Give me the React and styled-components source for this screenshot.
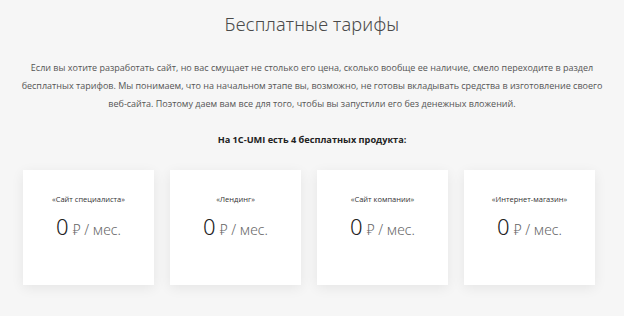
import styled, { createGlobalStyle } from 'styled-components';

const GlobalStyle = createGlobalStyle`
  html, body {
    margin: 0;
    padding: 0;
    background: #f6f6f6;
  }
`;

const Page = styled.div`
  width: 624px;
  height: 316px;
  box-sizing: border-box;
  padding-top: 10px;
  display: flex;
  flex-direction: column;
  align-items: center;
  background: #f6f6f6;
  font-family: 'Open Sans', 'Liberation Sans', sans-serif;
`;

const Title = styled.h1`
  margin: 0;
  font-family: 'Noto Sans', 'Open Sans', sans-serif;
  font-weight: 300;
  font-size: 18.2px;
  line-height: 28px;
  letter-spacing: 0.2px;
  color: #4a4a4a;
`;

const Lead = styled.p`
  margin: 21px 0 0;
  font-size: 9px;
  line-height: 18px;
  text-align: center;
  white-space: nowrap;
  color: #555555;
`;

const Subtitle = styled.p`
  margin: 19px 0 0;
  font-size: 9.2px;
  font-weight: 700;
  line-height: 16px;
  color: #222222;
`;

const Cards = styled.div`
  margin-top: 22px;
  display: flex;
  gap: 16px;
  padding-right: 6px;
`;

const Card = styled.div`
  width: 131px;
  height: 115px;
  box-sizing: border-box;
  padding-top: 23px;
  display: flex;
  flex-direction: column;
  align-items: center;
  background: #ffffff;
  box-shadow: 0 3px 12px rgba(0, 0, 0, 0.07);
`;

const Name = styled.div`
  font-size: 7.5px;
  line-height: 12px;
  color: #333333;
`;

const Price = styled.div`
  margin-top: 6px;
  display: flex;
  align-items: baseline;
  gap: 4px;
`;

const Amount = styled.span`
  font-family: 'Noto Sans', 'Open Sans', sans-serif;
  font-weight: 300;
  font-size: 22px;
  color: #222222;
`;

const Unit = styled.span`
  font-family: 'Noto Sans', 'Open Sans', sans-serif;
  font-weight: 300;
  font-size: 14px;
  color: #666666;
`;

const products = [
  '«Сайт специалиста»',
  '«Лендинг»',
  '«Сайт компании»',
  '«Интернет-магазин»',
];

export default function App() {
  return (
    <>
      <GlobalStyle />
      <Page>
        <Title>Бесплатные тарифы</Title>
        <Lead>
          Если вы хотите разработать сайт, но вас смущает не столько его цена, сколько вообще ее наличие, смело переходите в раздел
          <br />
          бесплатных тарифов. Мы понимаем, что на начальном этапе вы, возможно, не готовы вкладывать средства в изготовление своего
          <br />
          веб-сайта. Поэтому даем вам все для того, чтобы вы запустили его без денежных вложений.
        </Lead>
        <Subtitle>На 1С-UMI есть 4 бесплатных продукта:</Subtitle>
        <Cards>
          {products.map((p) => (
            <Card key={p}>
              <Name>{p}</Name>
              <Price>
                <Amount>0</Amount>
                <Unit>₽ / мес.</Unit>
              </Price>
            </Card>
          ))}
        </Cards>
      </Page>
    </>
  );
}
